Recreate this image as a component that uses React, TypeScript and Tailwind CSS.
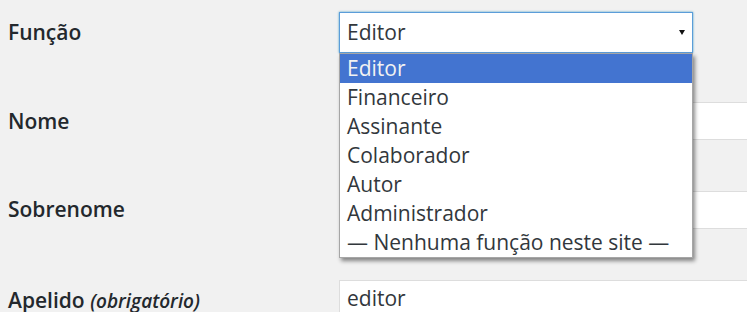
import React from "react";

const options = [
  "Editor",
  "Financeiro",
  "Assinante",
  "Colaborador",
  "Autor",
  "Administrador",
  "— Nenhuma função neste site —",
];

export default function App() {
  return (
    <div className="relative w-[747px] h-[312px] overflow-hidden bg-[#f1f1f1] font-['Open_Sans',sans-serif] text-[21px] text-[#23282d]">
      {/* Row: Função */}
      <div className="flex h-[89px]">
        <div className="w-[339px] shrink-0 pl-[8px] h-[65px] flex items-center font-semibold">Função</div>
        <div className="pt-[12px]">
          <div className="relative w-[354px] h-[41px] bg-white border border-[#5b9dd9] shadow-[0_0_2px_rgba(30,140,190,0.8)] flex items-center pl-[7px] text-[#32373c]">
            Editor
            <svg className="absolute right-[7px] top-[17px]" width="6" height="6" viewBox="0 0 6 6">
              <path d="M0 0 L6 0 L3 5 Z" fill="#111" />
            </svg>
          </div>
        </div>
      </div>
      {/* Row: Nome */}
      <div className="flex h-[89px]">
        <div className="w-[339px] shrink-0 pl-[8px] h-[66px] flex items-center font-semibold">Nome</div>
        <div className="pt-[13px]">
          <div className="w-[460px] h-[38px] bg-white border border-[#ddd]" />
        </div>
      </div>
      {/* Row: Sobrenome */}
      <div className="flex h-[89px]">
        <div className="w-[339px] shrink-0 pl-[8px] h-[64px] flex items-center font-semibold">Sobrenome</div>
        <div className="pt-[13px]">
          <div className="w-[460px] h-[38px] bg-white border border-[#ddd]" />
        </div>
      </div>
      {/* Row: Apelido */}
      <div className="flex h-[89px]">
        <div className="w-[339px] shrink-0 pl-[8px] h-[64px] flex items-baseline pt-[18px] font-semibold">
          Apelido&nbsp;<span className="italic text-[19px]">(obrigatório)</span>
        </div>
        <div className="pt-[13px]">
          <div className="w-[460px] h-[38px] bg-white border border-[#ddd] flex items-center pl-[7px] text-[#32373c]">
            editor
          </div>
        </div>
      </div>

      {/* Dropdown list overlay */}
      <div className="absolute left-[339px] top-[53px] w-[354px] bg-white border border-[#a6a6a6] shadow-[2px_3px_4px_rgba(0,0,0,0.45)] text-[#32373c]">
        {options.map((o, i) => (
          <div
            key={o}
            className={
              i === 0
                ? "h-[29px] flex items-center pl-[7px] bg-[#4374d0] text-[#f2f2f2]"
                : "h-[29px] flex items-center pl-[7px]"
            }
          >
            {o}
          </div>
        ))}
      </div>
    </div>
  );
}
